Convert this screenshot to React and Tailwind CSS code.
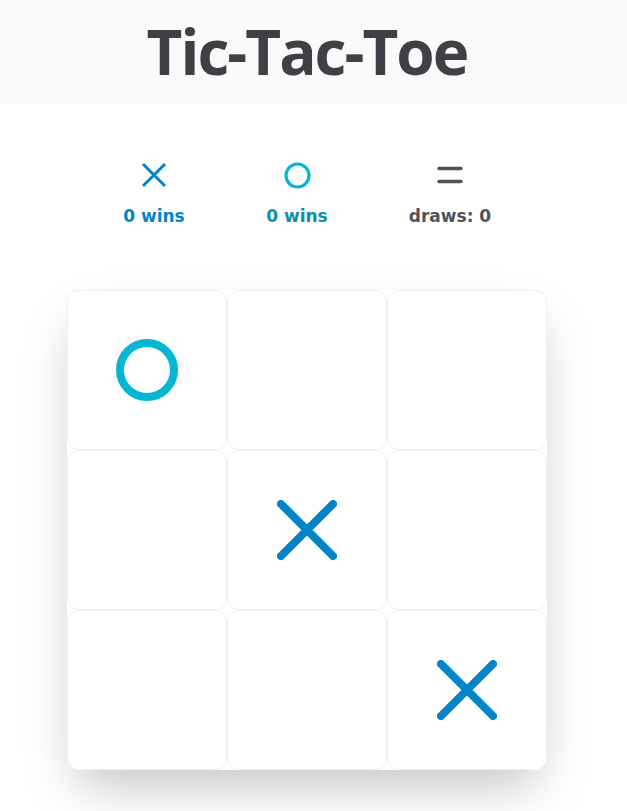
import React from "react";

function XMark({ size, stroke }) {
  return (
    <svg width={size} height={size} viewBox="0 0 60 60" fill="none">
      <path d="M4 4 L56 56 M56 4 L4 56" stroke="#0284c7" strokeWidth={stroke} strokeLinecap="round" />
    </svg>
  );
}

function OMark({ size, stroke }) {
  return (
    <svg width={size} height={size} viewBox="0 0 62 62" fill="none">
      <circle cx="31" cy="31" r={31 - stroke / 2} stroke="#06b6d4" strokeWidth={stroke} />
    </svg>
  );
}

const board = ["O", "", "", "", "X", "", "", "", "X"];

export default function App() {
  return (
    <div className="min-h-screen bg-white" style={{ fontFamily: '"Open Sans", sans-serif' }}>
      <header className="h-[104px] bg-[#fafafa] flex items-center justify-center pr-[13px]">
        <h1 className="text-[62px] font-bold text-[#3f3f46] leading-none tracking-[-2px] pb-[2px]">Tic-Tac-Toe</h1>
      </header>
      <div className="w-[614px] flex flex-col items-center">
        <div
          className="flex items-start gap-20 mt-[56px]"
          style={{ fontFamily: '"DejaVu Sans", sans-serif' }}
        >
          <div className="flex flex-col items-center w-[63px]">
            <div className="h-[30px] flex items-center">
              <svg width="26" height="26" viewBox="0 0 26 26" fill="none">
                <path d="M2 2 L24 24 M24 2 L2 24" stroke="#0284c7" strokeWidth="3" />
              </svg>
            </div>
            <div className="mt-[18px] text-[17px] font-bold text-[#0284c7] whitespace-nowrap leading-none">0 wins</div>
          </div>
          <div className="flex flex-col items-center w-[63px]">
            <div className="h-[30px] flex items-center">
              <svg width="27" height="27" viewBox="0 0 27 27" fill="none">
                <circle cx="13.5" cy="13.5" r="11.5" stroke="#06b6d4" strokeWidth="3.2" />
              </svg>
            </div>
            <div className="mt-[18px] text-[17px] font-bold text-[#0891b2] whitespace-nowrap leading-none">0 wins</div>
          </div>
          <div className="flex flex-col items-center w-[83px]">
            <div className="h-[30px] flex items-center">
              <svg width="26" height="18" viewBox="0 0 26 18" fill="none">
                <path d="M2 2.5 H24 M2 15.5 H24" stroke="#52525b" strokeWidth="3.5" strokeLinecap="round" />
              </svg>
            </div>
            <div className="mt-[18px] text-[17px] font-bold text-[#52525b] whitespace-nowrap leading-none">draws: 0</div>
          </div>
        </div>
        <div className="mt-[65px] grid grid-cols-3 w-[480px] h-[480px] rounded-xl bg-white shadow-2xl">
          {board.map((c, i) => (
            <div
              key={i}
              className="w-[160px] h-[160px] rounded-xl border border-[#f0f0f1] bg-white flex items-center justify-center"
            >
              {c === "X" && <XMark size={60} stroke={8} />}
              {c === "O" && <OMark size={62} stroke={8} />}
            </div>
          ))}
        </div>
      </div>
    </div>
  );
}
